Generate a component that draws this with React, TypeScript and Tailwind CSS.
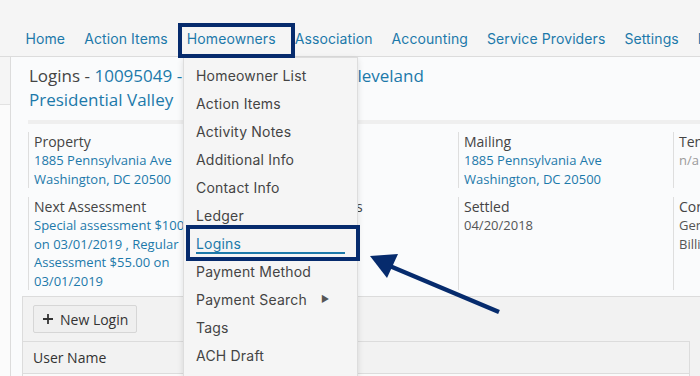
import React from "react";

const navItems = [
  "Home",
  "Action Items",
  "Homeowners",
  "Association",
  "Accounting",
  "Service Providers",
  "Settings",
  "Notices",
];

const menuItems = [
  "Homeowner List",
  "Action Items",
  "Activity Notes",
  "Additional Info",
  "Contact Info",
  "Ledger",
  "Logins",
  "Payment Method",
  "Payment Search",
  "Tags",
  "ACH Draft",
];

function Field({
  label,
  lines,
  muted,
  plain,
}: {
  label: string;
  lines: string[];
  muted?: boolean;
  plain?: boolean;
}) {
  return (
    <div className="border-l border-[#dedede] pl-[5px] whitespace-nowrap">
      <div className="text-[14px] leading-[19px] text-[#444]">{label}</div>
      {lines.map((l) => (
        <div
          key={l}
          className={`text-[13px] leading-[18.5px] ${
            muted ? "text-[#9a9a9a]" : plain ? "text-[#555]" : "text-[#1c79aa]"
          }`}
        >
          {l}
        </div>
      ))}
    </div>
  );
}

export default function App() {
  return (
    <div
      className="relative w-[700px] h-[376px] overflow-hidden bg-[#f5f5f5]"
      style={{ fontFamily: "'Open Sans', sans-serif" }}
    >
      {/* Top navigation */}
      <nav
        className="h-[57px] border-b border-[#dcdcdc] flex pl-[16px] pt-[29px] whitespace-nowrap"
        style={{ fontFamily: "Inter, sans-serif" }}
      >
        {navItems.map((n) => (
          <span key={n} className="px-[9.5px] text-[14px] leading-[20px] text-[#1c79aa] tracking-[0.1px]">
            {n}
          </span>
        ))}
      </nav>

      <div className="flex h-[319px]">
        {/* Left rail */}
        <div className="w-[11px] border-r border-[#dcdcdc] flex flex-col">
          <div className="h-[48px] border-b border-[#e2e2e2]" />
          <div className="flex-1 bg-[#fbfbfb]" />
        </div>

        {/* Main panel */}
        <main className="flex-1 bg-[#fafbfc] overflow-hidden">
          <div className="pl-[18px] pt-[7px] text-[17px] leading-[24px] whitespace-nowrap">
            <div className="text-[#444]">
              Logins - <span className="text-[#1c79aa]">10095049 - Mr. Stephen Grover Cleveland</span>
            </div>
            <div className="text-[#1c79aa]">Presidential Valley</div>
          </div>

          <div className="ml-[17px] mt-[8px] h-[4px] bg-[#efefef]" />

          <div className="ml-[17px] pt-[8px] grid grid-cols-[215px_215px_215px_215px] gap-y-[9px]">
            <Field label="Property" lines={["1885 Pennsylvania Ave", "Washington, DC 20500"]} />
            <Field label="Owner" lines={["George Cleveland", "Primary Owner"]} />
            <Field label="Mailing" lines={["1885 Pennsylvania Ave", "Washington, DC 20500"]} />
            <Field label="Tenant" lines={["n/a"]} muted />
            <Field
              label="Next Assessment"
              lines={[
                "Special assessment $100",
                "on 03/01/2019 , Regular",
                "Assessment $55.00 on",
                "03/01/2019",
              ]}
            />
            <Field label="Email Statements" lines={["Email and Print"]} plain />
            <Field label="Settled" lines={["04/20/2018"]} plain />
            <Field label="Contact Types" lines={["General", "Billing"]} plain />
          </div>

          {/* Logins section */}
          <section className="ml-[11px] mt-[6px] border-t border-l border-[#dcdcdc] bg-[#f2f2f2] h-[90px]">
            <div className="pl-[10px] pt-[8px] pb-[8px]">
              <button className="h-[28px] px-[8px] flex items-center gap-[6px] bg-[#efefef] border border-[#d6d6d6] rounded-[2px] text-[14px] text-[#333]">
                <svg width="12" height="12" viewBox="0 0 12 12">
                  <path d="M6 1v10M1 6h10" stroke="#333" strokeWidth="1.8" />
                </svg>
                New Login
              </button>
            </div>
            <div className="border-t border-[#dcdcdc] mr-[10px] border-r h-[32px] flex items-center pl-[10px] text-[14px] text-[#333]">
              User Name
            </div>
            <div className="border-t border-[#dcdcdc] mr-[10px] border-r h-[20px] bg-[#fafafa]" />
          </section>
        </main>
      </div>

      {/* Dropdown menu */}
      <div
        className="absolute left-[183px] top-[57px] w-[175px] h-[330px] bg-[#f5f5f5] border border-[#dddddd] shadow-[0_2px_6px_rgba(0,0,0,0.12)] pt-[3px]"
        style={{ fontFamily: "Inter, sans-serif" }}
      >
        {menuItems.map((m) => (
          <div key={m} className="h-[28px] pl-[12px] flex items-center text-[14px] text-[#444] tracking-[0.2px]">
            {m === "Logins" ? (
              <span className="relative text-[#1c79aa]">
                Logins
                <span className="absolute left-0 top-[19px] w-[149px] h-[2px] bg-[#1c79aa]" />
              </span>
            ) : (
              <span>{m}</span>
            )}
            {m === "Payment Search" && (
              <span className="ml-[14px] text-[9px] text-[#555]">▶</span>
            )}
          </div>
        ))}
      </div>

      {/* Annotation boxes */}
      <div className="absolute left-[178px] top-[23px] w-[117px] h-[35px] border-[4px] border-[#062b6d]" />
      <div className="absolute left-[186px] top-[225px] w-[174px] h-[36px] border-[4px] border-[#062b6d]" />

      {/* Annotation arrow */}
      <svg className="absolute left-0 top-0" width="700" height="376" viewBox="0 0 700 376">
        <line x1="499" y1="312" x2="385" y2="264" stroke="#062b6d" strokeWidth="4.5" />
        <polygon points="370,256 398,254 387,278" fill="#062b6d" />
      </svg>
    </div>
  );
}
